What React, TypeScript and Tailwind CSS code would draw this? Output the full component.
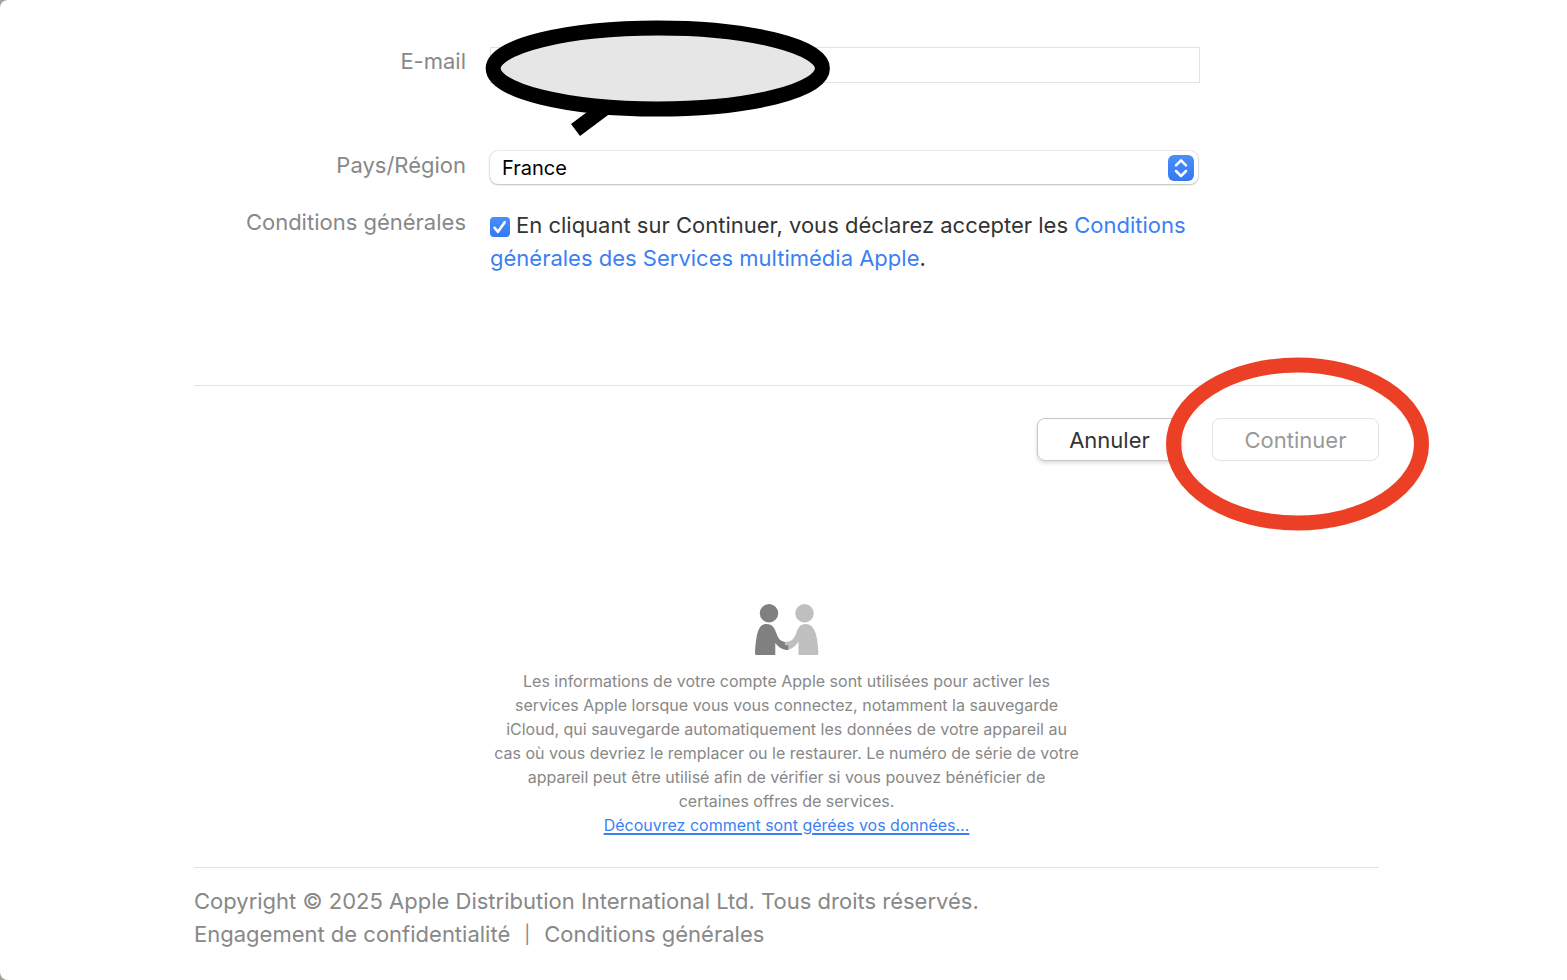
import type { ReactNode } from "react";

type FormRowProps = {
    label: string;
    htmlFor: string;
    className: string;
    children: ReactNode;
};

function FormRow({ label, htmlFor, className, children }: FormRowProps) {
    return (
        <div className={`flex gap-6 ${className}`}>
            <label htmlFor={htmlFor} className="w-[272px] shrink-0 text-right text-[#888888]">
                {label}
            </label>
            <div className="relative w-full max-w-[710px] pt-0.5">{children}</div>
        </div>
    );
}

function EmailMask() {
    return (
        <svg
            className="pointer-events-none absolute -top-[26px] -left-[5px] h-[118px] w-[348px]"
            viewBox="0 0 348 118"
            aria-hidden="true"
        >
            <path d="M90.5 111 L124 86" stroke="#000" strokeWidth="15" />
            <ellipse cx="172.8" cy="49.5" rx="164.6" ry="40.5" fill="#e6e6e6" stroke="#000" strokeWidth="15" />
        </svg>
    );
}

function RedCircle() {
    return (
        <svg
            className="pointer-events-none absolute -top-[62px] -left-[48px] h-[176px] w-[266px]"
            viewBox="0 0 266 176"
            aria-hidden="true"
        >
            <ellipse cx="133.5" cy="88" rx="124" ry="79" fill="none" stroke="#eb4026" strokeWidth="15" />
        </svg>
    );
}

function SelectArrows() {
    return (
        <svg
            className="pointer-events-none absolute top-1.5 right-1.5 h-[26px] w-[26px]"
            viewBox="0 0 26 26"
            aria-hidden="true"
        >
            <defs>
                <linearGradient id="arrows-bg" x1="0" y1="0" x2="0" y2="1">
                    <stop offset="0" stopColor="#4a8ff8" />
                    <stop offset="1" stopColor="#3478f6" />
                </linearGradient>
            </defs>
            <rect width="26" height="26" rx="6" fill="url(#arrows-bg)" />
            <path
                d="M8 10.3 L13 5.3 L18 10.3 M8 16 L13 21 L18 16"
                fill="none"
                stroke="#fff"
                strokeWidth="2.5"
                strokeLinecap="round"
                strokeLinejoin="round"
            />
        </svg>
    );
}

function TermsCheckbox() {
    return (
        <span className="relative mr-1.5 inline-block h-5 w-5 align-[-4px]">
            <input
                id="terms"
                type="checkbox"
                defaultChecked
                className="block h-5 w-5 appearance-none rounded-[4px] bg-linear-to-b from-[#4a8ff8] to-[#3478f6]"
            />
            <svg className="pointer-events-none absolute inset-0 h-5 w-5" viewBox="0 0 20 20" aria-hidden="true">
                <path
                    d="M4.6 10.8 L8 14.8 L14.7 5.2"
                    fill="none"
                    stroke="#fff"
                    strokeWidth="2.6"
                    strokeLinecap="round"
                    strokeLinejoin="round"
                />
            </svg>
        </span>
    );
}

function HandshakeIcon() {
    return (
        <svg className="mx-auto h-[51px] w-16" viewBox="0 0 64 51" aria-hidden="true">
            <g fill="#bfbfbf">
                <circle cx="49.5" cy="9.2" r="9.2" />
                <path d="M43.5 51 V37.5 C40 43 35.5 46 30.5 46 L30 38 C36 38 39 35 41 30 C42.8 24 45 20 50.5 20 C57 20 60.5 26 62 35 C63 41 63.3 46 63.3 49.5 Q63.3 51 61.8 51 Z" />
            </g>
            <g fill="#808080">
                <circle cx="14" cy="9.2" r="9.2" />
                <path d="M1.5 51 Q0 51 0 49.5 C0 46 0.3 41 1.3 35 C2.8 26 5 20 11.5 20 C17.5 20 19.5 24 21.3 29 C23.3 35 25.5 37 30 38 V41.3 H33.3 V46 C28 46 23.5 43.5 20.3 39 V51 Z" />
            </g>
        </svg>
    );
}

export default function App() {
    return (
        <div className="bg-[#a3a39b]">
            <main className="min-h-screen rounded-l-lg bg-white pt-[45px] pr-[188px] pb-6 pl-[194px] font-['Inter',sans-serif] text-[22px] leading-[33px] text-[#333333]">
                <form>
                    <FormRow label="E-mail" htmlFor="email" className="h-[104px]">
                        <input
                            id="email"
                            type="email"
                            className="block h-9 w-full border border-[#e3e3e3] px-3 outline-none"
                        />
                        <EmailMask />
                    </FormRow>

                    <FormRow label="Pays/Région" htmlFor="country" className="h-[57px]">
                        <div className="mr-0.5">
                            <select
                                id="country"
                                className="block h-[33px] w-full appearance-none rounded-lg bg-white px-3 pt-0.5 text-[20px] leading-[31px] text-black shadow-[0_0_2px_rgba(0,0,0,0.25),0_1px_2px_rgba(0,0,0,0.2)]"
                            >
                                <option>France</option>
                            </select>
                            <SelectArrows />
                        </div>
                    </FormRow>

                    <FormRow label="Conditions générales" htmlFor="terms" className="pb-[110px]">
                        <p className="pt-px">
                            <TermsCheckbox />
                            En cliquant sur Continuer, vous déclarez accepter les{" "}
                            <a href="#" className="text-[#3b7ff5]">
                                Conditions générales des Services multimédia Apple
                            </a>
                            .
                        </p>
                    </FormRow>

                    <div className="flex justify-end gap-[30px] border-t border-[#e3e3e3] pt-8">
                        <button
                            type="button"
                            className="h-[43px] w-[145px] rounded-lg border border-[#c8c8c8] bg-white pt-0.5 shadow-[0_2px_4px_rgba(0,0,0,0.15)]"
                        >
                            Annuler
                        </button>
                        <div className="relative">
                            <button
                                type="submit"
                                disabled
                                className="h-[43px] w-[167px] rounded-lg border border-[#e3e3e3] bg-white pt-0.5 text-[#999999]"
                            >
                                Continuer
                            </button>
                            <RedCircle />
                        </div>
                    </div>
                </form>

                <section className="mx-auto mt-[143px] max-w-[620px] text-center text-[16px] leading-6 text-[#888888]">
                    <HandshakeIcon />
                    <p className="mt-3.5">
                        Les informations de votre compte Apple sont utilisées pour activer les
                        <br />
                        services Apple lorsque vous vous connectez, notamment la sauvegarde
                        <br />
                        iCloud, qui sauvegarde automatiquement les données de votre appareil au
                        <br />
                        cas où vous devriez le remplacer ou le restaurer. Le numéro de série de votre
                        <br />
                        appareil peut être utilisé afin de vérifier si vous pouvez bénéficier de
                        <br />
                        certaines offres de services.
                        <br />
                        <a href="#" className="text-[#3b7ff5] underline decoration-2 underline-offset-2">
                            Découvrez comment sont gérées vos données…
                        </a>
                    </p>
                </section>

                <footer className="mt-[30px] border-t border-[#e3e3e3] pt-[17px] text-[#888888]">
                    <p>Copyright © 2025 Apple Distribution International Ltd. Tous droits réservés.</p>
                    <nav className="flex gap-3.5">
                        <a href="#">Engagement de confidentialité</a>
                        <span className="text-[18px]">|</span>
                        <a href="#">Conditions générales</a>
                    </nav>
                </footer>
            </main>
        </div>
    );
}
